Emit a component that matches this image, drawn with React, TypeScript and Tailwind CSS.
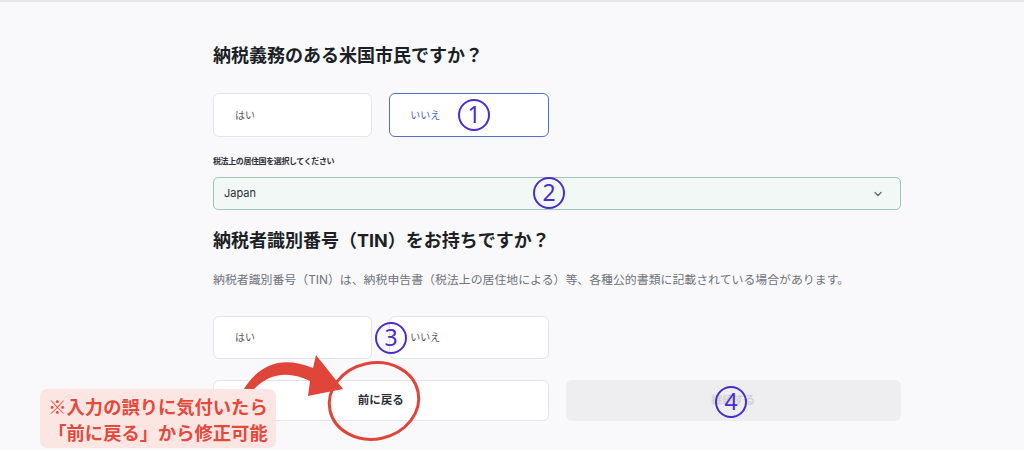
import React from "react";
import { ChevronDown } from "lucide-react";

const font = { fontFamily: '"Inter", "Noto Sans CJK JP", sans-serif' };

function Circled({ n, left, top }: { n: string; left: number; top: number }) {
  return (
    <div
      className="absolute w-[32px] h-[32px] rounded-full border-2 border-[#4a2bd0] flex items-center justify-center text-[23px] leading-none text-[#4a2bd0]"
      style={{ left, top, fontFamily: '"Noto Sans", sans-serif' }}
    >
      <span className="-mt-[1px]">{n}</span>
    </div>
  );
}

export default function App() {
  return (
    <div className="relative w-[1024px] h-[450px] overflow-hidden bg-[#f9f9fb]" style={font}>
      <div className="h-[2px] bg-[#e6e6ea]" />
      <div className="pl-[213px] w-[901px]">
        <h1 className="mt-[41px] text-[18px] leading-[26px] font-bold text-[#1c1f26]">
          納税義務のある米国市民ですか？
        </h1>
        <div className="mt-[24px] grid grid-cols-4 gap-x-[17px]">
          <div className="h-[44px] flex items-center pl-[21px] bg-white border border-[#e4e4e8] rounded-[6px] text-[10px] text-[#555]">
            はい
          </div>
          <div className="h-[44px] flex items-center pl-[20px] bg-white border-[1.5px] border-[#5370cc] rounded-[6px] text-[10px] text-[#4463c4]">
            いいえ
          </div>
        </div>
        <div className="mt-[17px] text-[8px] tracking-[-0.4px] leading-[14px] font-semibold text-[#2c2f36]">
          税法上の居住国を選択してください
        </div>
        <div className="mt-[9px] h-[33px] flex items-center justify-between px-[10px] bg-[#f2f8f5] border border-[#9cc6b6] rounded-[5px]">
          <span className="text-[11px] text-[#2a2d33]">Japan</span>
          <ChevronDown size={12} strokeWidth={2.5} className="text-[#666] mr-[6px]" />
        </div>
        <h2 className="mt-[18px] text-[18px] leading-[26px] font-bold text-[#1c1f26]">
          納税者識別番号（TIN）をお持ちですか？
        </h2>
        <p className="mt-[18px] text-[11.9px] leading-[16px] text-[#70737a]">
          納税者識別番号（TIN）は、納税申告書（税法上の居住地による）等、各種公的書類に記載されている場合があります。
        </p>
        <div className="mt-[28px] grid grid-cols-4 gap-x-[17px]">
          <div className="h-[43px] flex items-center pl-[21px] bg-white border border-[#e4e4e8] rounded-[6px] text-[10px] text-[#555]">
            はい
          </div>
          <div className="h-[43px] flex items-center pl-[20px] bg-white border border-[#e4e4e8] rounded-[6px] text-[10px] text-[#555]">
            いいえ
          </div>
        </div>
        <div className="mt-[21px] grid grid-cols-2 gap-x-[17px]">
          <div className="h-[41px] flex items-center justify-center bg-white border border-[#e4e4e8] rounded-[6px] text-[11.5px] font-bold text-[#2c2f36]">
            前に戻る
          </div>
          <div className="h-[41px] flex items-center justify-center bg-[#eeeef1] rounded-[6px] text-[11px] font-bold text-[#d2d2d6]">
            継続する
          </div>
        </div>
      </div>

      {/* annotations */}
      <svg className="absolute inset-0 pointer-events-none" width="1024" height="450" viewBox="0 0 1024 450">
        <path
          d="M242 392 Q267 349 313 368 L316 355 L343 389 L308 396 L310 381 Q273 363 248 396 Z"
          fill="#e0453a"
        />
        <ellipse
          cx="374"
          cy="401"
          rx="45"
          ry="38"
          transform="rotate(-12 374 401)"
          fill="none"
          stroke="#e0453a"
          strokeWidth="3"
        />
      </svg>

      <div
        className="absolute left-[40px] top-[389px] w-[236px] h-[59px] rounded-[7px] bg-[#fce6e3] flex flex-col items-center justify-center text-[18.3px] leading-[26px] font-bold text-[#e4493b]"
        style={{ fontFamily: '"Noto Sans CJK JP", sans-serif' }}
      >
        <span>※入力の誤りに気付いたら</span>
        <span>「前に戻る」から修正可能</span>
      </div>

      <Circled n="1" left={458} top={99} />
      <Circled n="2" left={533} top={177} />
      <Circled n="3" left={375} top={322} />
      <Circled n="4" left={715} top={386} />
    </div>
  );
}
